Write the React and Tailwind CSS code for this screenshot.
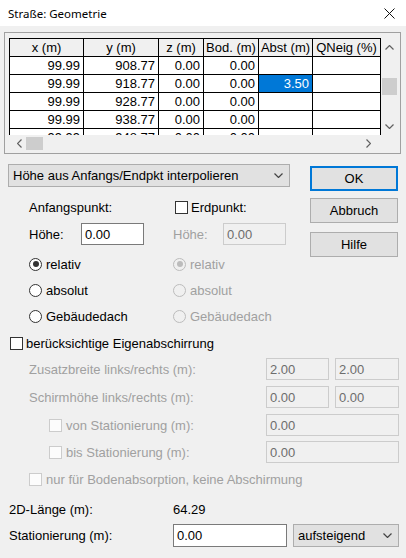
import React from 'react';

const cols = [
  { label: 'x (m)', w: 'w-[74px]' },
  { label: 'y (m)', w: 'w-[75px]' },
  { label: 'z (m)', w: 'w-[45px]' },
  { label: 'Bod. (m)', w: 'w-[55px]' },
  { label: 'Abst (m)', w: 'w-[54px]' },
  { label: 'QNeig (%)', w: 'w-[68px]' },
];

const rows = [
  ['99.99', '908.77', '0.00', '0.00', '', ''],
  ['99.99', '918.77', '0.00', '0.00', '3.50', ''],
  ['99.99', '928.77', '0.00', '0.00', '', ''],
  ['99.99', '938.77', '0.00', '0.00', '', ''],
  ['99.99', '948.77', '0.00', '0.00', '', ''],
];

const Chevron = ({ dir = 'down', className = '' }) => {
  const pts = {
    down: '0,0 4,4 8,0',
    up: '0,4 4,0 8,4',
    left: '4,0 0,4 4,8',
    right: '0,0 4,4 0,8',
  }[dir];
  const horiz = dir === 'left' || dir === 'right';
  return (
    <svg width={horiz ? 5 : 9} height={horiz ? 9 : 5} viewBox={horiz ? '-0.5 -0.5 5 9' : '-0.5 -0.5 9 5'} className={`shrink-0 ${className}`}>
      <polyline points={pts} fill="none" stroke="currentColor" strokeWidth="1.2" />
    </svg>
  );
};

const Checkbox = ({ disabled }) => (
  <span
    className={`inline-block w-[13px] h-[13px] border shrink-0 ${
      disabled ? 'border-[#cccccc] bg-[#fcfcfc]' : 'border-[#333333] bg-white'
    }`}
  />
);

const Radio = ({ checked, disabled }) => (
  <span
    className={`flex items-center justify-center w-[13px] h-[13px] rounded-full border shrink-0 ${
      disabled ? 'border-[#bcbcbc] bg-[#f0f0f0]' : 'border-[#333333] bg-white'
    }`}
  >
    {checked && <span className={`w-[6px] h-[6px] rounded-full ${disabled ? 'bg-[#bcbcbc]' : 'bg-[#333333]'}`} />}
  </span>
);

const Field = ({ value, disabled, className = '' }) => (
  <div
    className={`flex items-center pl-[3px] h-[22px] border ${
      disabled ? 'border-[#cccccc] bg-[#f0f0f0] text-[#6d6d6d]' : 'border-[#7a7a7a] bg-white text-black'
    } ${className}`}
  >
    {value}
  </div>
);

const Combo = ({ value, className = '' }) => (
  <div className={`flex items-center justify-between h-[23px] pl-[4px] pr-[6px] border border-[#adadad] bg-[#e1e1e1] ${className}`}>
    <span>{value}</span>
    <Chevron dir="down" className="text-[#444444]" />
  </div>
);

const Button = ({ children, primary, className = '' }) => (
  <div
    className={`flex items-center justify-center h-[25px] w-[88px] bg-[#e1e1e1] ${
      primary ? 'border-2 border-[#0078d7]' : 'border border-[#adadad]'
    } ${className}`}
  >
    {children}
  </div>
);

const PointGrid = () => (
  <div className="flex flex-col">
    <div className="flex border-l border-t border-black">
      {cols.map((c) => (
        <div key={c.label} className={`${c.w} h-[18px] flex items-center justify-center border-r border-b border-black bg-[#f0f0f0]`}>
          {c.label}
        </div>
      ))}
    </div>
    {rows.map((r, i) => (
      <div key={i} className="flex border-l border-black">
        {r.map((v, j) => {
          const sel = i === 1 && j === 4;
          return (
            <div
              key={j}
              className={`${cols[j].w} h-[18px] flex items-center justify-end pr-[3px] border-r border-b border-black ${
                sel ? 'bg-[#0078d7] text-white' : 'bg-white'
              }`}
            >
              {v}
            </div>
          );
        })}
      </div>
    ))}
  </div>
);

export default function App() {
  return (
    <div className="w-[406px] h-[558px] overflow-hidden bg-[#f0f0f0] text-[13px] leading-[15px] text-black font-['Liberation_Sans',Arial,sans-serif]">
      {/* title bar */}
      <div className="h-[26px] bg-white flex items-center justify-between pl-[8px] pr-[11px]">
        <span className="text-[11.5px] font-['Noto_Sans',sans-serif]">Straße: Geometrie</span>
        <svg width="11" height="11" viewBox="0 0 11 11">
          <path d="M0.5 0.5 L10.5 10.5 M10.5 0.5 L0.5 10.5" stroke="#111" strokeWidth="1" />
        </svg>
      </div>

      {/* points table */}
      <div className="ml-[4px] mt-[6px] w-[397px] h-[122px] border border-[#a0a0a0] pl-[4px] pt-[5px]">
        <div className="flex h-[97px]">
          <div className="w-[372px] h-[97px] overflow-hidden">
            <PointGrid />
          </div>
          <div className="w-[17px] h-[97px] flex flex-col items-center text-[#606060]">
            <Chevron dir="up" className="mt-[7px]" />
            <div className="w-[15px] h-[17px] bg-[#cdcdcd] mt-[28px]" />
            <Chevron dir="down" className="mt-auto mb-[6px]" />
          </div>
        </div>
        <div className="flex h-[17px] w-[372px] items-center text-[#606060]">
          <Chevron dir="left" className="ml-[8px]" />
          <div className="w-[17px] h-[13px] bg-[#cdcdcd] ml-[4px]" />
          <Chevron dir="right" className="ml-auto mr-[10px]" />
        </div>
      </div>

      {/* interpolation settings and buttons */}
      <div className="flex">
        <div className="ml-[8px] w-[282px] flex flex-col">
          <Combo value="Höhe aus Anfangs/Endpkt interpolieren" className="mt-[10px]" />
          <div className="grid grid-cols-[144px_1fr] ml-[21px]">
            <div className="h-[24px] mt-[8px] flex items-center">Anfangspunkt:</div>
            <div className="h-[24px] mt-[8px] flex items-center gap-[3px] ml-[2px]">
              <Checkbox />
              <span>Erdpunkt:</span>
            </div>
            <div className="h-[22px] mt-[4px] flex items-center">
              <span className="w-[52px]">Höhe:</span>
              <Field value="0.00" className="w-[63px]" />
            </div>
            <div className="h-[22px] mt-[4px] flex items-center text-[#a0a0a0]">
              <span className="w-[50px]">Höhe:</span>
              <Field value="0.00" disabled className="w-[63px]" />
            </div>
            <div className="mt-[6px] flex flex-col">
              {['relativ', 'absolut', 'Gebäudedach'].map((t, i) => (
                <div key={t} className="h-[26px] flex items-center gap-[4px]">
                  <Radio checked={i === 0} />
                  <span>{t}</span>
                </div>
              ))}
            </div>
            <div className="mt-[6px] flex flex-col text-[#a0a0a0]">
              {['relativ', 'absolut', 'Gebäudedach'].map((t, i) => (
                <div key={t} className="h-[26px] flex items-center gap-[4px]">
                  <Radio checked={i === 0} disabled />
                  <span>{t}</span>
                </div>
              ))}
            </div>
          </div>
        </div>
        <div className="ml-[20px] flex flex-col">
          <Button primary className="mt-[12px]">OK</Button>
          <Button className="mt-[7px]">Abbruch</Button>
          <Button className="mt-[9px]">Hilfe</Button>
        </div>
      </div>

      {/* own shielding */}
      <div className="h-[26px] flex items-center gap-[3px] ml-[10px] mt-[1px]">
        <Checkbox />
        <span>berücksichtige Eigenabschirrung</span>
      </div>
      <div className="text-[#a0a0a0]">
        <div className="h-[22px] mt-[2px] flex items-center ml-[29px]">
          <span className="w-[237px]">Zusatzbreite links/rechts (m):</span>
          <Field value="2.00" disabled className="w-[63px]" />
          <Field value="2.00" disabled className="w-[64px] ml-[6px]" />
        </div>
        <div className="h-[22px] mt-[6px] flex items-center ml-[29px]">
          <span className="w-[237px]">Schirmhöhe links/rechts (m):</span>
          <Field value="0.00" disabled className="w-[63px]" />
          <Field value="0.00" disabled className="w-[64px] ml-[6px]" />
        </div>
        <div className="h-[22px] mt-[6px] flex items-center ml-[49px]">
          <div className="w-[217px] flex items-center gap-[4px]">
            <Checkbox disabled />
            <span>von Stationierung (m):</span>
          </div>
          <Field value="0.00" disabled className="w-[133px]" />
        </div>
        <div className="h-[22px] mt-[5px] flex items-center ml-[49px]">
          <div className="w-[217px] flex items-center gap-[4px]">
            <Checkbox disabled />
            <span>bis Stationierung (m):</span>
          </div>
          <Field value="0.00" disabled className="w-[133px]" />
        </div>
        <div className="h-[26px] mt-[3px] flex items-center gap-[4px] ml-[29px]">
          <Checkbox disabled />
          <span>nur für Bodenabsorption, keine Abschirmung</span>
        </div>
      </div>

      {/* length and stationing */}
      <div className="h-[26px] mt-[4px] flex items-center ml-[9px]">
        <span className="w-[164px]">2D-Länge (m):</span>
        <span>64.29</span>
      </div>
      <div className="h-[23px] mt-[2px] flex items-center ml-[9px]">
        <span className="w-[164px]">Stationierung (m):</span>
        <Field value="0.00" className="w-[114px] h-[23px]" />
        <Combo value="aufsteigend" className="w-[106px] ml-[6px]" />
      </div>
    </div>
  );
}
